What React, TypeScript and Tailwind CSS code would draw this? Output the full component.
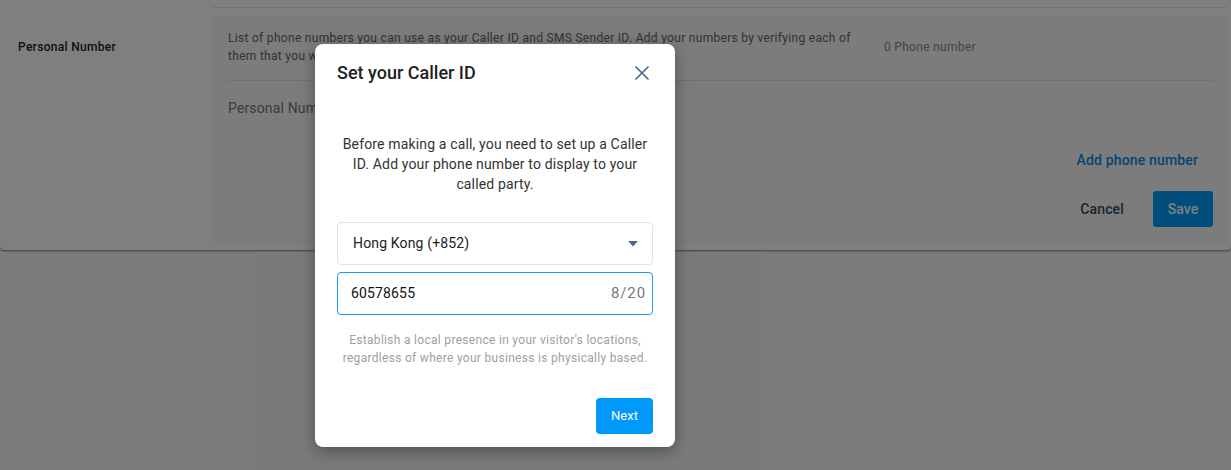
import React from "react";

export default function App() {
  return (
    <div
      className="relative w-[1231px] h-[470px] overflow-hidden bg-[#f4f5f6]"
      style={{ fontFamily: "Roboto, 'Noto Sans', Arial, sans-serif" }}
    >
      {/* Underlying page card */}
      <div className="bg-white rounded-b-[4px] shadow-[0_1px_2px_rgba(0,0,0,0.5)] h-[250px] flex flex-col">
        <div className="ml-[212px] mr-[4px] h-[8px] border-b border-[#e6e6e6]" />
        <div className="flex flex-1 pt-[8px] pb-[6px]">
          <div className="w-[212px] pl-[18px] pt-[22px] text-[12px] tracking-[0.3px] font-medium text-[#222]">
            Personal Number
          </div>
          <div className="flex-1 mr-[4px] bg-[#f8f8f8] px-[16px] pr-[14px] flex flex-col">
            <div className="flex items-start pt-[13px] pb-[15px] border-b border-[#e3e3e3]">
              <div className="w-[630px] text-[12px] leading-[18px] tracking-[0.3px] text-[#666]">
                List of phone numbers you can use as your Caller ID and SMS Sender ID. Add your numbers by verifying each of them that you want to use.
              </div>
              <div className="ml-[26px] pt-[9px] text-[12px] tracking-[0.3px] text-[#888]">0 Phone number</div>
            </div>
            <div className="pt-[17px] text-[14px] leading-[20px] tracking-[0.15px] text-[#777]">Personal Number</div>
            <div className="flex justify-end pt-[32px] pr-[15px]">
              <span className="text-[14px] font-medium tracking-[0.15px] text-[#0a8ae6] leading-[20px]">Add phone number</span>
            </div>
            <div className="flex justify-end items-center gap-[29px] pt-[21px]">
              <span className="text-[14px] font-medium tracking-[0.15px] text-[#334a60]">Cancel</span>
              <span className="w-[60px] h-[36px] rounded-[3px] bg-[#009cf8] text-white text-[14px] font-medium flex items-center justify-center">
                Save
              </span>
            </div>
          </div>
        </div>
      </div>

      {/* Overlay */}
      <div className="absolute inset-0 bg-black/50" />

      {/* Modal */}
      <div className="absolute left-[315px] top-[44px] w-[360px] h-[403px] bg-white rounded-[8px] shadow-[0_4px_16px_rgba(0,0,0,0.35)] flex flex-col px-[22px]">
        <div className="flex items-center justify-between pt-[9px] h-[50px]">
          <h2 className="text-[18px] font-medium text-[#222] leading-[24px] pb-[2px]">Set your Caller ID</h2>
          <svg width="16" height="16" viewBox="0 0 16 16" className="mr-[3px] mb-[2px]">
            <path d="M2 2 L14 14 M14 2 L2 14" stroke="#4a6a8c" strokeWidth="1.7" strokeLinecap="round" />
          </svg>
        </div>
        <p className="mt-[40px] text-center text-[14px] leading-[20px] tracking-[0.15px] text-[#333]">
          Before making a call, you need to set up a Caller ID. Add your phone number to display to your called party.
        </p>
        <div className="mt-[28px] h-[43px] border border-[#dfe3e6] rounded-[4px] flex items-center justify-between pl-[15px] pr-[14px]">
          <span className="text-[14px] tracking-[0.15px] text-[#222]">Hong Kong (+852)</span>
          <svg width="10" height="6" viewBox="0 0 10 6">
            <path d="M0 0 L10 0 L5 5.5 Z" fill="#4b6885" />
          </svg>
        </div>
        <div className="mt-[7px] h-[43px] border border-[#1a96ff] rounded-[4px] flex items-center justify-between pl-[13px] pr-[6px]">
          <span className="text-[14px] tracking-[0.15px] text-[#111]">60578655</span>
          <span className="text-[15px] tracking-[0.9px] text-[#777]">8/20</span>
        </div>
        <p className="mt-[16px] text-center text-[12px] leading-[18px] tracking-[0.3px] text-[#a0a0a0]">
          Establish a local presence in your visitor's locations, regardless of where your business is physically based.
        </p>
        <div className="flex justify-end mt-[31px]">
          <span className="w-[57px] h-[36px] rounded-[4px] bg-[#0098fa] text-white text-[13px] flex items-center justify-center">
            Next
          </span>
        </div>
      </div>
    </div>
  );
}
